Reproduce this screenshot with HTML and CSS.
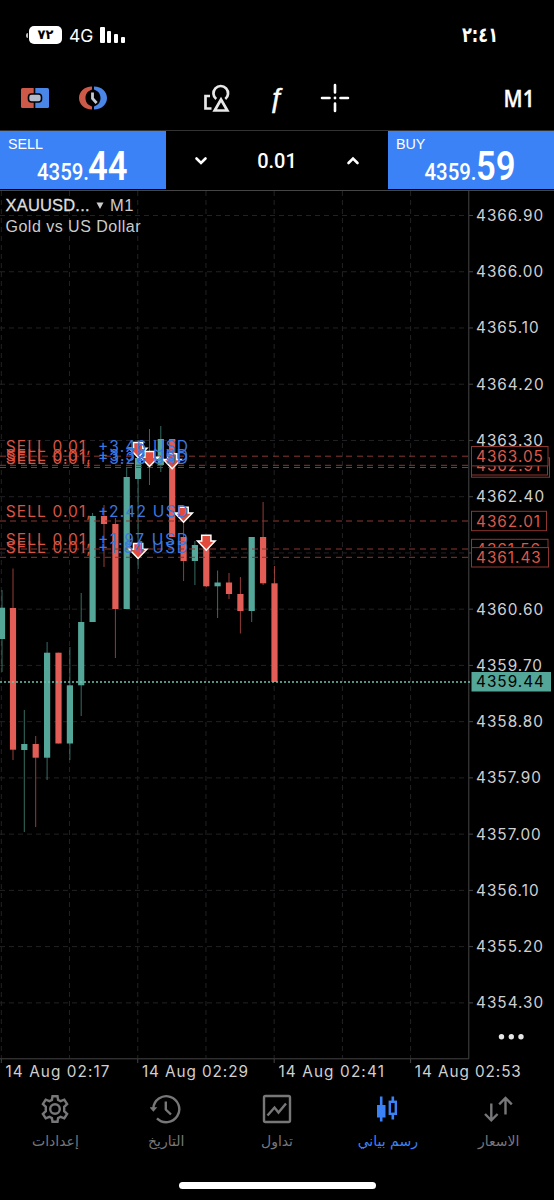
FILE: index.html
```
<!DOCTYPE html>
<html lang="ar">
<head>
    <meta charset="UTF-8">
    <meta name="viewport" content="width=device-width, initial-scale=1.0">
    <title>XAUUSD M1</title>
    <link rel="stylesheet" href="styles.css">
</head>
<body>
    <div class="app">
        <header class="status-bar">
            <div class="status-left">
                <span class="battery-tip"></span>
                <span class="battery">٧٢</span>
                <span class="network">4G</span>
                <span class="signal"><i class="s4"></i><i class="s3"></i><i class="s2"></i><i class="s1"></i></span>
            </div>
            <svg class="clock" width="38" height="24" viewBox="0 0 38 24">
                <text x="1" y="19" textLength="36" lengthAdjust="spacingAndGlyphs">٢:٤١</text>
            </svg>
        </header>

        <div class="toolbar">
            <svg class="icon-trade" width="30" height="22" viewBox="0 0 30 22">
                <path d="M2.5 1H13.7V21H2.5Q1 21 1 19.5V2.5Q1 1 2.5 1Z" fill="#cd5a48"/>
                <path d="M15.3 1H27.5Q29 1 29 2.5V19.5Q29 21 27.5 21H15.3Z" fill="#4a86e8"/>
                <rect x="8.5" y="7" width="13" height="8" rx="3" fill="#b4bccb" stroke="#000" stroke-width="1.6"/>
            </svg>
            <svg class="icon-time" width="30" height="24" viewBox="0 0 30 24">
                <path d="M14 .5C6 .5 1 6 1 12S6 23.500 14 23.500V20.500C9.500 19 7.500 16 7.500 12S9.500 5 14 3.500Z" fill="#cd5a48"/>
                <path d="M16 .5C24 .5 29 6 29 12S24 23.500 16 23.500V20.500C20.500 19 22.500 16 22.500 12S20.500 5 16 3.500Z" fill="#4a86e8"/>
                <path d="M14.500 6.500V12.500L18.600 17" fill="none" stroke="#c3c9d2" stroke-width="2.800"/>
            </svg>
            <svg class="icon-shapes" width="27" height="29" viewBox="0 0 27 29">
                <g fill="none" stroke="#e8e8e8" stroke-width="2.700">
                    <path d="M7 12H2.500V24.500H8.500"/>
                    <path d="M13.200 15A7.300 7.300 0 1 1 22.300 15"/>
                    <path d="M18 15.500L24.300 26.500H11.700Z"/>
                </g>
            </svg>
            <span class="icon-function">ƒ</span>
            <svg class="icon-cross" width="30" height="30" viewBox="0 0 30 30">
                <path d="M15 2V9.500M15 20.500V28M2 15H9.500M20.500 15H28" stroke="#fff" stroke-width="2.600" stroke-linecap="round"/>
                <circle cx="15" cy="15" r="1.400" fill="#fff"/>
            </svg>
            <svg class="timeframe" width="32" height="24" viewBox="0 0 32 24">
                <text x="1.500" y="20.500" textLength="31" lengthAdjust="spacingAndGlyphs">M1</text>
            </svg>
        </div>

        <div class="trade-bar">
            <div class="quote">
                <span class="quote-side">SELL</span>
                <svg class="quote-price" width="166" height="34" viewBox="0 0 166 34">
                    <text class="big-figure" x="37" y="31" textLength="52" lengthAdjust="spacingAndGlyphs">4359.</text>
                    <text class="pips" x="88" y="31" textLength="39.500" lengthAdjust="spacingAndGlyphs">44</text>
                </svg>
            </div>
            <div class="volume">
                <svg width="16" height="12" viewBox="0 0 16 12"><path d="M3.500 3.500L8 8L12.500 3.500"/></svg>
                <span>0.01</span>
                <svg width="16" height="12" viewBox="0 0 16 12"><path d="M3.500 8L8 3.500L12.500 8"/></svg>
            </div>
            <div class="quote">
                <span class="quote-side">BUY</span>
                <svg class="quote-price" width="166" height="34" viewBox="0 0 166 34">
                    <text class="big-figure" x="36.500" y="31" textLength="52" lengthAdjust="spacingAndGlyphs">4359.</text>
                    <text class="pips" x="88" y="31" textLength="39.500" lengthAdjust="spacingAndGlyphs">59</text>
                </svg>
            </div>
        </div>

        <svg class="chart" id="chart" width="554" height="895" viewBox="0 190 554 895">
            <g id="grid"></g>
            <g id="candles"></g>
            <g id="orders"></g>
            <g id="priceTags"></g>
            <text class="symbol" x="5.500" y="211" textLength="84">XAUUSD...</text>
            <path d="M96.500 202.500H103.500L100 209Z" fill="#ccc"/>
            <text class="symbol period" x="110" y="211" textLength="23.500">M1</text>
            <text class="symbol-name" x="5.500" y="231.500" textLength="135">Gold vs US Dollar</text>
            <g fill="#e6e6e6"><circle cx="501.500" cy="1036.700" r="2.700"/><circle cx="511.300" cy="1036.700" r="2.700"/><circle cx="521" cy="1036.700" r="2.700"/></g>
        </svg>

        <nav class="tabs">
            <a class="tab">
                <svg width="32" height="32" viewBox="0 0 32 32">
                    <path d="M13.500 3.200h5l.6 3.700 2.500 1.300 3.700-1.500 2.800 4.400-2.900 2.700v4.400l2.900 2.700-2.800 4.400-3.700-1.500-2.500 1.300-.6 3.700h-5l-.6-3.700-2.500-1.300-3.700 1.500-2.800-4.400 2.900-2.700v-4.400L3.900 11.100l2.800-4.400 3.700 1.500 2.500-1.300Z"/>
                    <circle cx="16" cy="16" r="4.800"/>
                </svg>
                <span>إعدادات</span>
            </a>
            <a class="tab">
                <svg width="32" height="32" viewBox="0 0 32 32">
                    <path d="M3.300 15.500A13 13 0 1 1 7 25.300M15.800 8.500V16.500L21 21.500"/>
                    <path d="M.8 14.800L3.400 17.800L6 14.800Z" fill="currentColor" stroke-width="1.200"/>
                </svg>
                <span>التاريخ</span>
            </a>
            <a class="tab">
                <svg width="32" height="32" viewBox="0 0 32 32">
                    <rect x="3" y="3" width="26" height="26" rx="1.500"/>
                    <path d="M6.500 22.500L13.500 14.500L17.500 19.500L25 10.500"/>
                </svg>
                <span>تداول</span>
            </a>
            <a class="tab active">
                <svg width="32" height="32" viewBox="0 0 32 32">
                    <path d="M9.200 3.500V28.500M20.800 3.500V8M20.800 21.500V26.500" stroke-width="2.600"/>
                    <rect x="5" y="12" width="8.500" height="12.500" fill="currentColor" stroke="none"/>
                    <rect x="17.800" y="8.800" width="6" height="12"/>
                </svg>
                <span>رسم بياني</span>
            </a>
            <a class="tab">
                <svg width="32" height="32" viewBox="0 0 32 32">
                    <path d="M8.300 10.500V27M2 21L8.300 27.300L14.600 21M22.500 21.500V5M16.200 11.300L22.500 5L28.800 11.300"/>
                </svg>
                <span>الاسعار</span>
            </a>
        </nav>
        <div class="home-indicator"></div>
    </div>

    <script>
        // x, wick top, body top, body bottom, wick bottom, direction
        const candles = [
            [2, 590, 607.7, 639, 672, 'up'],
            [13, 568.5, 608, 749.7, 760, 'down'],
            [24.3, 710, 744, 750, 832, 'up'],
            [35.7, 736, 744, 757.7, 827, 'down'],
            [47.1, 642, 652.7, 757.7, 780, 'up'],
            [58.5, 652.7, 652.7, 743.5, 743.5, 'down'],
            [69.9, 647, 685.3, 743.5, 760, 'up'],
            [81.2, 593, 622, 685.3, 716, 'up'],
            [92.6, 513, 516, 622, 622, 'up'],
            [104, 505, 516, 524, 567, 'down'],
            [115.4, 518, 524, 609, 658, 'down'],
            [126.7, 468, 477, 609, 609, 'up'],
            [138.1, 440, 458, 479, 569, 'up'],
            [149.5, 429, 457, 460, 485, 'down'],
            [160.8, 426, 439, 465, 472, 'up'],
            [172.2, 439, 439, 537, 537, 'down'],
            [183.6, 521, 537, 561, 581, 'down'],
            [194.9, 541, 545, 561, 585, 'up'],
            [206.3, 545, 545, 586.3, 587, 'down'],
            [217.6, 570.5, 582.5, 586.3, 618, 'up'],
            [229, 573, 582.5, 594, 599, 'down'],
            [240.4, 577, 594, 611, 633.5, 'down'],
            [251.7, 537, 537, 611, 622, 'up'],
            [263.1, 502, 537, 583.3, 585, 'down'],
            [274.5, 566, 583.3, 682, 682, 'down']
        ];

        // price, line y, profit, tag right edge, arrow x
        const orders = [
            ['4362.87', 467.5, '+3.28', 549.5, 172.2],
            ['4362.91', 465.3, '+3.32', 547.5, 149.5],
            ['4363.05', 456.2, '+3.46', 548, 138.1],
            ['4362.01', 521, '+2.42', 546.5, 183.6],
            ['4361.56', 549, '+1.97', 548, 206.3],
            ['4361.43', 557.3, '+1.84', 548.5, 138.1]
        ];

        // label, text width
        const times = [
            ['14 Aug 02:17', 105],
            ['14 Aug 02:29', 107],
            ['14 Aug 02:41', 106.5],
            ['14 Aug 02:53', 107]
        ];

        let grid = '';
        for (let i = 0; i < 15; i++) {
            const y = 215.5 + i * 56.24;
            const price = (4366.9 - i * 0.9).toFixed(2);
            grid += `<path class="grid-line" d="M0 ${y}H468"/><path class="tick" d="M469 ${y}H473"/>`;
            // 4361.50 is hidden behind the order tags
            if (i !== 6) {
                grid += `<text class="axis-text" x="476" y="${y + 5.5}">${price}</text>`;
            }
        }
        for (let i = 0; i < 7; i++) {
            const x = 1.3 + i * 68.22;
            grid += `<path class="grid-line" d="M${x} 191V1058"/>`;
            if (i % 2 === 0) {
                const [label, width] = times[i / 2];
                grid += `<path class="tick" d="M${x} 1059V1063"/>`;
                grid += `<text class="axis-text" x="${x + 4.2}" y="1076.8" textLength="${width}">${label}</text>`;
            }
        }
        grid += '<path class="frame" d="M0 190.500H554M468.800 190V1058.800H0"/>';
        document.getElementById('grid').innerHTML = grid;

        let bars = '';
        candles.forEach(([x, high, top, bottom, low, dir]) => {
            bars += `<path class="wick ${dir}" d="M${x} ${high}V${low}"/>`;
            bars += `<rect class="body ${dir}" x="${x - 3.1}" y="${top}" width="6.2" height="${bottom - top}"/>`;
        });
        document.getElementById('candles').innerHTML = bars;

        let lines = '';
        let arrows = '';
        let labels = '';
        let tags = '';
        orders.forEach(([price, y, profit, right, x]) => {
            lines += `<path class="order-line" d="M0 ${y}H468"/>`;
            arrows += `<path class="arrow" d="M${x} ${y + 1.2}l-8.800 -9.200h4.200v-5.800h9.200v5.800h4.200Z"/>`;
            labels += `<text class="order-text" x="5.800" y="${y - 4}" textLength="85">SELL 0.01,</text>`;
            labels += `<text class="order-text profit" x="98" y="${y - 4}" textLength="90">${profit} USD</text>`;
            tags += `<rect class="tag" x="471.5" y="${y - 9.7}" width="${right - 471.5}" height="19.4"/>`;
            tags += `<text class="axis-text tag-text" x="476" y="${y + 5.5}">${price}</text>`;
        });
        document.getElementById('orders').innerHTML = lines + arrows + labels + '<path class="bid-line" d="M0 682H470"/>';
        document.getElementById('priceTags').innerHTML = tags +
            '<rect class="bid-tag" x="471.5" y="672" width="79.500" height="19.500"/>' +
            '<text class="axis-text bid-text" x="476" y="687.300">4359.44</text>';
    </script>
</body>
</html>
```
FILE: styles.css
```
body {
    margin: 0;
    background-color: #000;
    color: #fff;
    font-family: Inter, 'Liberation Sans', sans-serif;
}
.app {
    display: flex;
    flex-direction: column;
    width: 554px;
    height: 1200px;
    overflow: hidden;
}
.status-bar {
    display: flex;
    justify-content: space-between;
    align-items: center;
    height: 70px;
    padding: 0 55px 0 26px;
}
.status-left {
    display: flex;
    align-items: center;
}
.battery-tip {
    width: 2px;
    height: 5px;
    margin-right: 1px;
    border-radius: 2px 0 0 2px;
    background-color: #bbb;
}
.battery {
    width: 33px;
    height: 18px;
    border-radius: 5px;
    background-color: #fff;
    color: #000;
    font: bold 13px/17px 'DejaVu Sans', sans-serif;
    text-align: center;
}
.network {
    margin-left: 7px;
    font-size: 17.5px;
}
.signal {
    display: flex;
    align-items: flex-end;
    gap: 2.5px;
    margin-left: 7px;
}
.signal i {
    width: 4.3px;
    border-radius: 1px;
    background-color: #fff;
}
.s4 { height: 16px; }
.s3 { height: 12px; }
.s2 { height: 9px; }
.s1 { height: 6px; }
.clock {
    direction: ltr;
    overflow: visible;
}
.clock text {
    fill: #fff;
    font: bold 21px 'DejaVu Sans', sans-serif;
}
.toolbar {
    display: flex;
    align-items: center;
    height: 56px;
    padding: 0 20px 4px;
}
.icon-time {
    margin-left: 28px;
}
.icon-shapes {
    margin-left: 95px;
}
.icon-function {
    width: 20px;
    margin-left: 36px;
    font: italic 27px/32px 'Liberation Sans', sans-serif;
    -webkit-text-stroke: 0.5px #fff;
    text-align: center;
}
.icon-cross {
    margin-left: 34px;
}
.timeframe {
    margin-left: auto;
    overflow: visible;
}
.timeframe text {
    fill: #fff;
    font: 600 24px 'Open Sans', sans-serif;
    stroke: #fff;
    stroke-width: 0.3;
}
.trade-bar {
    display: flex;
    height: 58px;
    padding-bottom: 1px;
    border-top: 1px solid #333;
}
.quote {
    display: flex;
    flex-direction: column;
    width: 166px;
    background-color: #3b82f6;
}
.quote-side {
    height: 18px;
    padding: 4px 8px 0;
    font: 14.3px/18px 'Liberation Sans', sans-serif;
}
.quote-price {
    margin-top: -4px;
    overflow: visible;
}
.quote-price text {
    fill: #fff;
    font-family: Roboto, sans-serif;
}
.big-figure {
    font-size: 24px;
    font-weight: 500;
}
.pips {
    font-size: 40px;
    font-weight: 600;
}
.volume {
    display: flex;
    flex: 1;
    align-items: center;
    justify-content: space-between;
    padding: 2px 27px 0;
    font: 500 20px Roboto, sans-serif;
}
.volume path {
    fill: none;
    stroke: #fff;
    stroke-width: 2.6;
    stroke-linecap: round;
}
.chart {
    display: block;
    flex: none;
}
.grid-line {
    stroke: #222226;
    stroke-dasharray: 5 4;
}
.tick,
.frame {
    fill: none;
    stroke: #454545;
}
.axis-text {
    fill: #d0d0d0;
    font-size: 15.3px;
    letter-spacing: 1px;
}
.symbol {
    fill: #dedede;
    font: 16.5px 'Liberation Sans', sans-serif;
    stroke: #dedede;
    stroke-width: 0.3;
}
.period {
    stroke: none;
    fill: #ccc;
}
.symbol-name {
    fill: #ccc;
    font: 16px 'Liberation Sans', sans-serif;
}
.wick {
    opacity: 0.65;
}
.wick.up { stroke: #54a698; }
.wick.down { stroke: #e15d55; }
.body.up { fill: #54a698; }
.body.down { fill: #e15d55; }
.order-line {
    stroke: #8d3630;
    stroke-dasharray: 6 4 6 5;
}
.arrow {
    fill: #e14b3b;
    stroke: #fff;
    stroke-width: 1.5;
}
.order-text {
    fill: #d95343;
    font-size: 15.5px;
}
.profit {
    fill: #3b78e0;
}
.bid-line {
    stroke: #6fc3b0;
    stroke-width: 1.3;
    stroke-dasharray: 2 2;
}
.tag {
    fill: #000;
    stroke: #8d3630;
}
.tag-text {
    fill: #dc5848;
}
.bid-tag {
    fill: #54a698;
}
.bid-text {
    fill: #000;
}
.tabs {
    display: flex;
    height: 72px;
    padding-top: 8px;
}
.tab {
    display: flex;
    flex: 1;
    flex-direction: column;
    align-items: center;
    color: #77777a;
    font: 14px/22px 'DejaVu Sans', sans-serif;
    direction: rtl;
}
.tab svg {
    fill: none;
    stroke: currentColor;
    stroke-width: 2.4;
}
.tab span {
    margin-top: 5px;
}
.tab.active {
    color: #3b82f6;
}
.home-indicator {
    width: 197px;
    height: 7px;
    margin: 17px auto 0;
    border-radius: 4px;
    background-color: #fff;
}
```
